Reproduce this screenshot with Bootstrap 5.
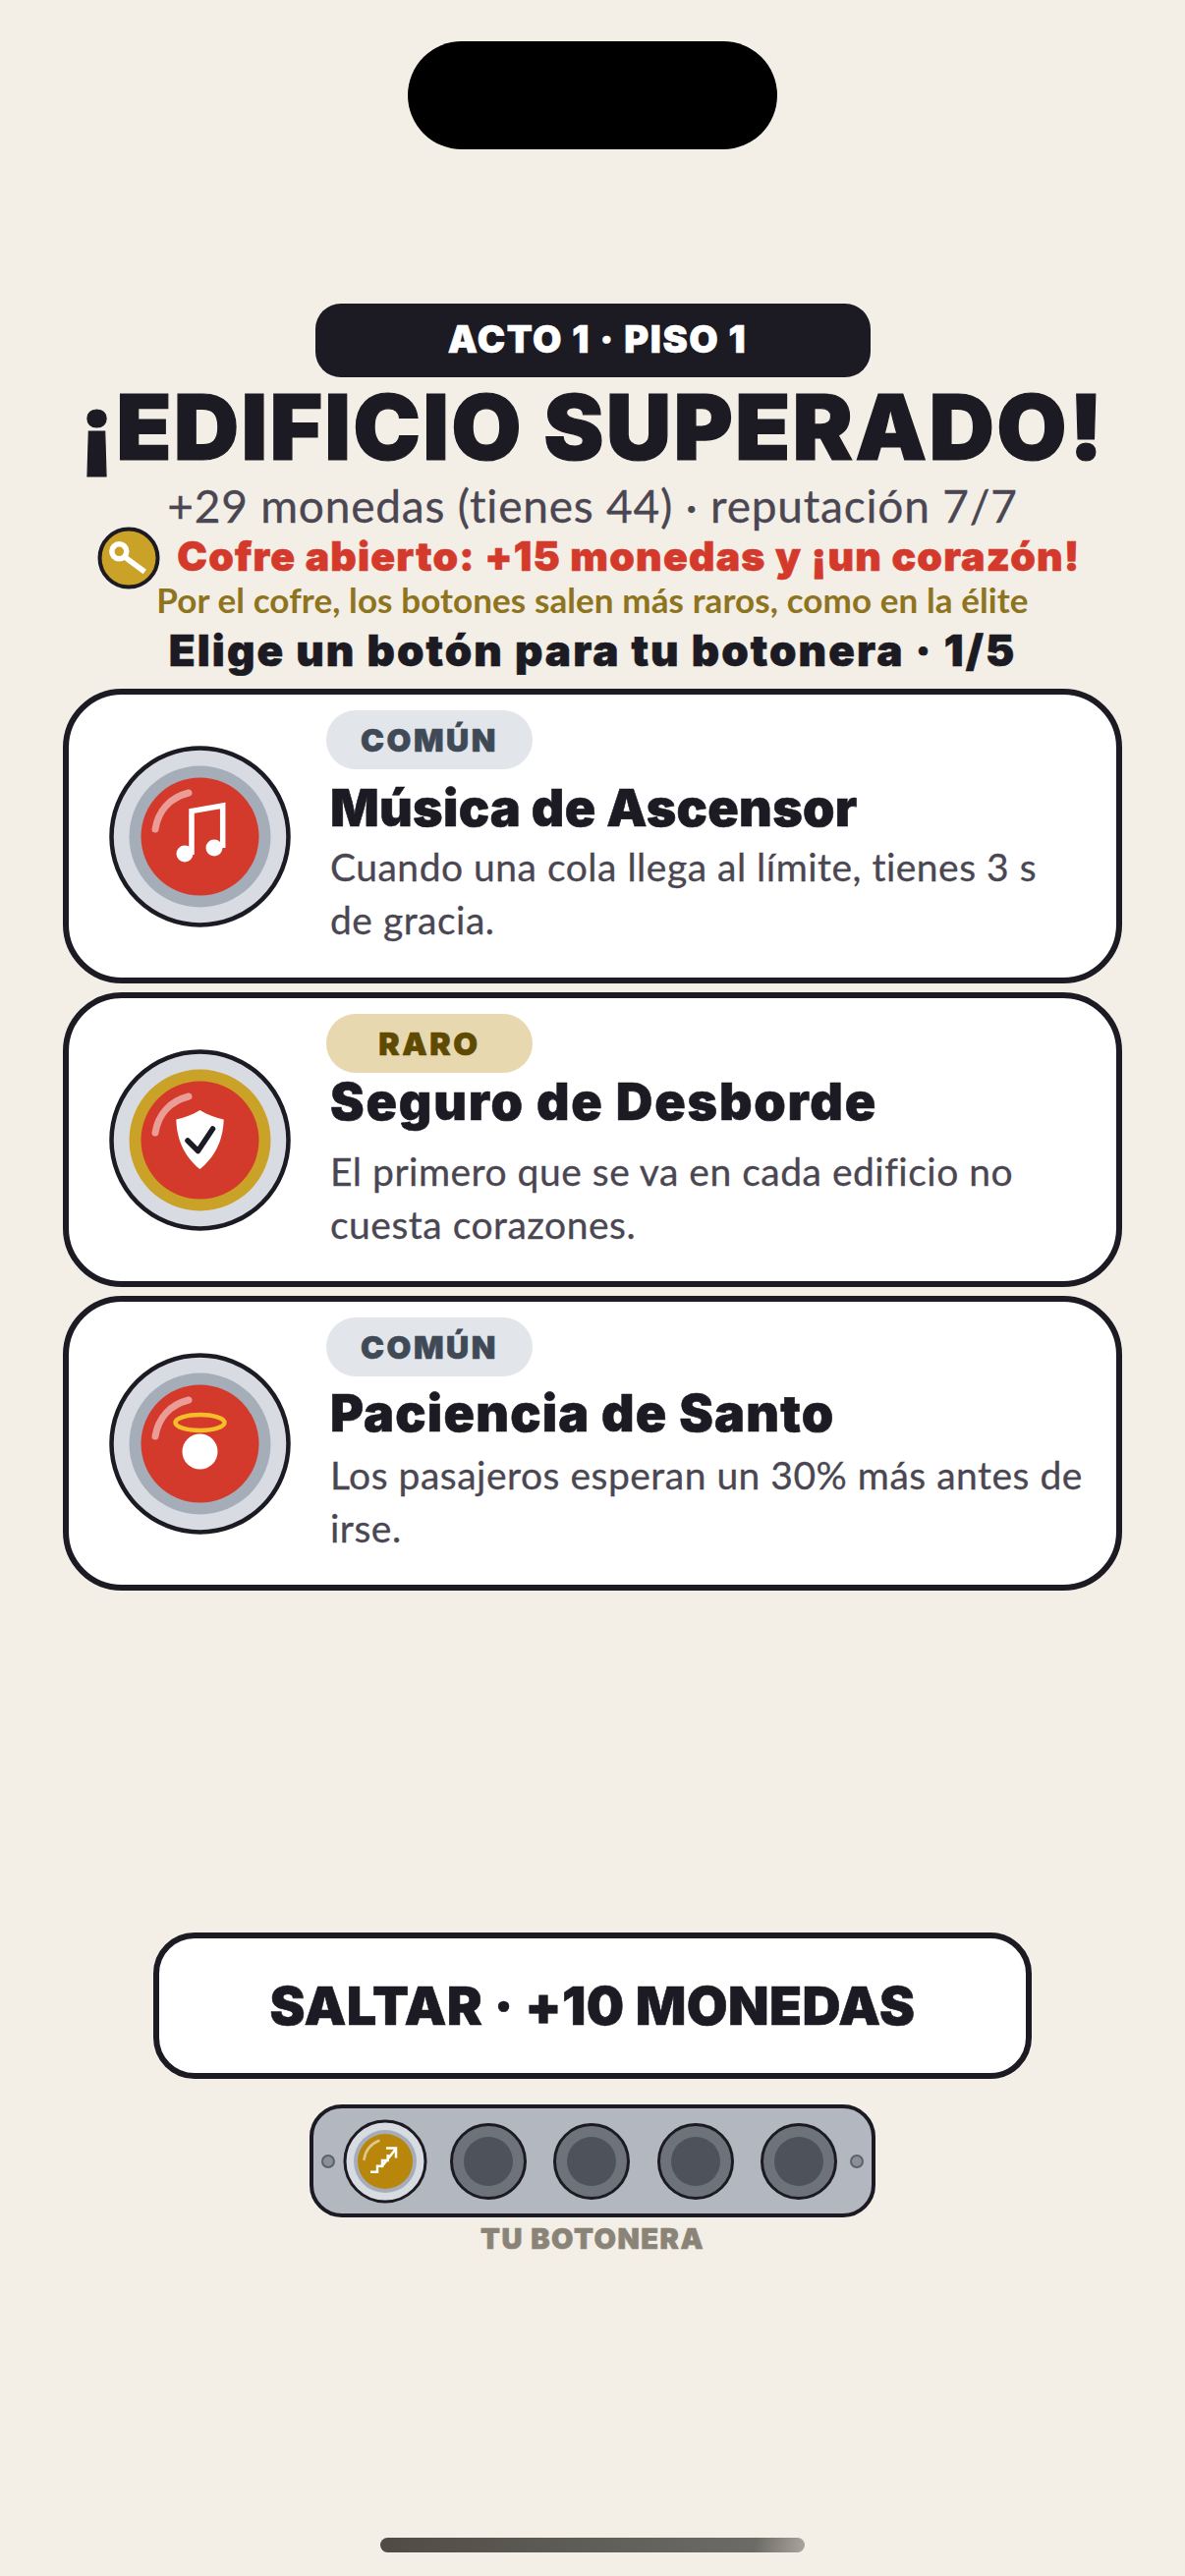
<!doctype html>
<html lang="es">
<head>
<meta charset="utf-8">
<title>Edificio superado</title>
<link href="https://cdn.jsdelivr.net/npm/bootstrap@5.3.0/dist/css/bootstrap.min.css" rel="stylesheet">
<style>
html,body{margin:0;background:#f3eee6;}
body{font-family:"Lato","Noto Sans",sans-serif;color:#1c1a22;font-variant-ligatures:none;}
.screen{width:1206px;height:2622px;overflow:hidden;background:#f3eee6;}
.notch{width:376px;height:110px;margin-top:42px;margin-bottom:157px;background:#000;border-radius:55px;}
.heavy{font-family:"Inter","Lato",sans-serif;font-weight:900;-webkit-text-stroke:.6px currentColor;}
.act-pill{width:565px;height:75px;background:#1c1a22;color:#fff;border-radius:26px;font-size:38px;letter-spacing:1.6px;line-height:72px;padding-left:10px;}
.big-title{height:100px;margin:1px 0 5px;font-size:92px;letter-spacing:2.2px;line-height:100px;white-space:nowrap;color:#1c1a22;-webkit-text-stroke:1.2px currentColor;}
.sub-line{height:54px;font-size:46px;line-height:50px;color:#4a4652;white-space:nowrap;letter-spacing:.8px;-webkit-text-stroke:.3px currentColor;}
.chest-line{height:44px;gap:17px;margin-left:-7px;}
.chest-text{font-size:41px;letter-spacing:1.2px;line-height:44px;color:#d43a2c;white-space:nowrap;}
.coin{width:64px;height:64px;margin:-8px 0 -12px;flex:none;}
.elite-line{height:46px;font-size:35px;letter-spacing:.1px;line-height:44px;font-weight:700;color:#8f7420;white-space:nowrap;}
.choose-line{height:58px;font-size:44px;letter-spacing:2.1px;line-height:56px;white-space:nowrap;margin-bottom:9px;}
.offer-list{width:1078px;gap:9px;}
.offer{height:300px;background:#fff;border:6px solid #1c1a22;border-radius:60px;padding:0 20px 0 41px;gap:36px;}
.push{width:185px;height:185px;flex:none;}
.offer-copy{padding-top:16px;min-width:0;}
.tier{display:block;width:210px;height:60px;line-height:62px;padding:0;font-size:32px;letter-spacing:2.6px;}
.tier-common{background:#e2e5ea;color:#3f4a56;}
.tier-rare{background:#e8d8b0;color:#5e4a00;}
.offer-name{font-size:52px;letter-spacing:.3px;line-height:58px;margin:0 0 0 4px;color:#1c1a22;white-space:nowrap;}
.offer-text{font-size:39px;letter-spacing:.5px;line-height:54px;color:#4a4652;margin:0 0 0 4px;width:768px;-webkit-text-stroke:.3px currentColor;}
.nudge-a .offer-name{margin-top:11px;}.nudge-a .offer-text{margin-top:3px;}
.nudge-b .offer-name{margin-top:1px;letter-spacing:1.8px;}.nudge-b .offer-text{margin-top:14px;}
.nudge-c .offer-name{margin-top:9px;letter-spacing:1.2px;}.nudge-c .offer-text{margin-top:6px;}
.skip-btn{width:894px;height:149px;margin-top:348px;background:#fff;border:6px solid #1c1a22;border-radius:42px;font-size:54px;letter-spacing:.4px;line-height:1;color:#1c1a22;padding:0;}
.panel{width:576px;height:115px;margin-top:26px;background:#b3b8c0;border:4px solid #1c1a22;border-radius:33px;padding:0 7px 0 8px;}
.screw{width:14px;height:14px;flex:none;border-radius:50%;background:#8b9098;border:2px solid #5c616a;}
.slot-on{width:86px;height:86px;flex:none;margin:0 22.5px 0 8px;}
.slot-off{width:78px;height:78px;flex:none;border-radius:50%;background:#6d727b;border:3px solid #1c1a22;margin-right:27.5px;}
.slot-last{margin-right:13px;}
.slot-core{width:50px;height:50px;border-radius:50%;background:#4e525b;}
.panel-label{margin-top:6px;font-size:29px;line-height:32px;color:#8a8478;letter-spacing:1.5px;}
.home-bar{width:432px;height:15px;margin-top:288px;border-radius:8px;background:linear-gradient(100deg,#4f4c46 0%,#6d6b65 88%,#a9a69f 100%);}
</style>
</head>
<body>
<div class="screen d-flex flex-column align-items-center">
  <div class="notch"></div>
  <div class="act-pill heavy text-center">ACTO 1 · PISO 1</div>
  <h1 class="big-title heavy">¡EDIFICIO SUPERADO!</h1>
  <div class="sub-line">+29 monedas (tienes 44) · reputación 7/7</div>
  <div class="chest-line d-flex align-items-center">
    <svg class="coin" viewBox="0 0 64 64"><circle cx="32" cy="32" r="29.5" fill="#c9a227" stroke="#1c1a22" stroke-width="4"/><circle cx="22.3" cy="25.3" r="7.5" fill="none" stroke="#fff" stroke-width="5.5"/><path d="M28 31 48.3 46" fill="none" stroke="#fff" stroke-width="5.5"/></svg>
    <span class="chest-text heavy">Cofre abierto: +15 monedas y ¡un corazón!</span>
  </div>
  <div class="elite-line">Por el cofre, los botones salen más raros, como en la élite</div>
  <div class="choose-line heavy">Elige un botón para tu botonera · 1/5</div>

  <div class="offer-list d-flex flex-column">
    <div class="card offer nudge-a flex-row align-items-center">
      <svg class="push" viewBox="0 0 185 185"><circle cx="92.5" cy="92.5" r="90" fill="#d8dce2" stroke="#1c1a22" stroke-width="4.5"/><circle cx="92.5" cy="92.5" r="72" fill="#a5aeb8"/><circle cx="92.5" cy="92.5" r="60" fill="#d43a2c"/><path d="M47 85C50 66 62 53 81 48" fill="none" stroke="#fff" stroke-opacity=".5" stroke-width="7" stroke-linecap="round"/><path d="M84 111V66.500L115.700 61V104" fill="none" stroke="#fff" stroke-width="5.500"/><circle cx="77" cy="110" r="8.500" fill="#fff"/><circle cx="107" cy="104" r="8.500" fill="#fff"/></svg>
      <div class="offer-copy align-self-start">
        <span class="badge rounded-pill tier tier-common heavy">COMÚN</span>
        <h2 class="offer-name heavy">Música de Ascensor</h2>
        <p class="offer-text">Cuando una cola llega al límite, tienes 3 s de gracia.</p>
      </div>
    </div>
    <div class="card offer nudge-b flex-row align-items-center">
      <svg class="push" viewBox="0 0 185 185"><circle cx="92.5" cy="92.5" r="90" fill="#d8dce2" stroke="#1c1a22" stroke-width="4.5"/><circle cx="92.5" cy="92.5" r="72" fill="#c9a227"/><circle cx="92.5" cy="92.5" r="60" fill="#d43a2c"/><path d="M47 85C50 66 62 53 81 48" fill="none" stroke="#fff" stroke-opacity=".5" stroke-width="7" stroke-linecap="round"/><path d="M92.500 62C84 67 76 70 68.300 71.500C69 95 79 111 92.500 122C106 111 116 95 116.700 71.500C109 70 101 67 92.500 62Z" fill="#fff"/><path d="M80 93 90.500 103.500 105.500 81" fill="none" stroke="#1c1a22" stroke-width="5.500" stroke-linecap="round" stroke-linejoin="round"/></svg>
      <div class="offer-copy align-self-start">
        <span class="badge rounded-pill tier tier-rare heavy">RARO</span>
        <h2 class="offer-name heavy">Seguro de Desborde</h2>
        <p class="offer-text">El primero que se va en cada edificio no cuesta corazones.</p>
      </div>
    </div>
    <div class="card offer nudge-c flex-row align-items-center">
      <svg class="push" viewBox="0 0 185 185"><circle cx="92.5" cy="92.5" r="90" fill="#d8dce2" stroke="#1c1a22" stroke-width="4.5"/><circle cx="92.5" cy="92.5" r="72" fill="#a5aeb8"/><circle cx="92.5" cy="92.5" r="60" fill="#d43a2c"/><path d="M47 85C50 66 62 53 81 48" fill="none" stroke="#fff" stroke-opacity=".5" stroke-width="7" stroke-linecap="round"/><ellipse cx="92.500" cy="71" rx="25" ry="8" fill="none" stroke="#f5bd2a" stroke-width="4.500"/><circle cx="92.500" cy="100.500" r="18" fill="#fff"/></svg>
      <div class="offer-copy align-self-start">
        <span class="badge rounded-pill tier tier-common heavy">COMÚN</span>
        <h2 class="offer-name heavy">Paciencia de Santo</h2>
        <p class="offer-text">Los pasajeros esperan un 30% más antes de irse.</p>
      </div>
    </div>
  </div>

  <button type="button" class="btn skip-btn heavy">SALTAR · +10 MONEDAS</button>

  <div class="panel d-flex align-items-center">
    <span class="screw"></span>
    <svg class="slot-on" viewBox="0 0 86 86"><circle cx="43" cy="43" r="41" fill="#d8dce2" stroke="#1c1a22" stroke-width="3"/><circle cx="43" cy="43" r="32" fill="#a5aeb8"/><circle cx="43" cy="43" r="28" fill="#b8860b"/><path d="M21.500 41C23 31 29 25 36.500 22" fill="none" stroke="#fff" stroke-opacity=".55" stroke-width="2.500" stroke-linecap="round"/><path d="M28 53.700H35V47.700H40V42H45.700V36M39 49 54 30M44 29.500H54V39.500" fill="none" stroke="#fff" stroke-width="2.500"/></svg>
    <span class="slot-off d-flex align-items-center justify-content-center"><span class="slot-core"></span></span>
    <span class="slot-off d-flex align-items-center justify-content-center"><span class="slot-core"></span></span>
    <span class="slot-off d-flex align-items-center justify-content-center"><span class="slot-core"></span></span>
    <span class="slot-off slot-last d-flex align-items-center justify-content-center"><span class="slot-core"></span></span>
    <span class="screw"></span>
  </div>
  <div class="panel-label heavy">TU BOTONERA</div>
  <div class="home-bar"></div>
</div>
<script src="https://cdn.jsdelivr.net/npm/bootstrap@5.3.0/dist/js/bootstrap.bundle.min.js"></script>
</body>
</html>
